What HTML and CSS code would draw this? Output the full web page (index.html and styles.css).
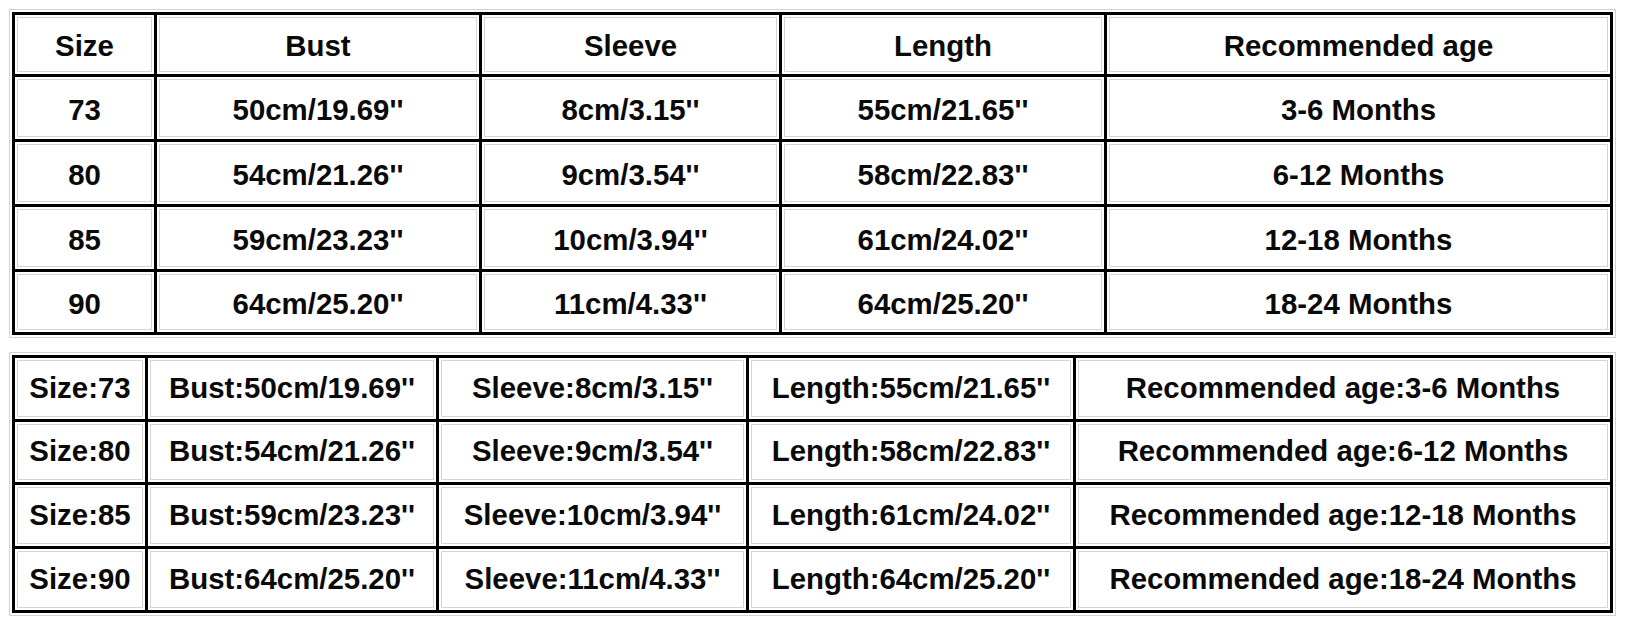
FILE: index.html
```html
<!DOCTYPE html>
<html lang="en">
<head>
<meta charset="utf-8">
<title>Size chart</title>
<link rel="stylesheet" href="styles.css">
</head>
<body>
<main class="page">
  <div class="chart chart-top">
    <div class="cell">Size</div><div class="cell">Bust</div><div class="cell">Sleeve</div><div class="cell">Length</div><div class="cell">Recommended age</div>
    <div class="cell">73</div><div class="cell">50cm/19.69''</div><div class="cell">8cm/3.15''</div><div class="cell">55cm/21.65''</div><div class="cell">3-6 Months</div>
    <div class="cell">80</div><div class="cell">54cm/21.26''</div><div class="cell">9cm/3.54''</div><div class="cell">58cm/22.83''</div><div class="cell">6-12 Months</div>
    <div class="cell">85</div><div class="cell">59cm/23.23''</div><div class="cell">10cm/3.94''</div><div class="cell">61cm/24.02''</div><div class="cell">12-18 Months</div>
    <div class="cell">90</div><div class="cell">64cm/25.20''</div><div class="cell">11cm/4.33''</div><div class="cell">64cm/25.20''</div><div class="cell">18-24 Months</div>
  </div>
  <div class="chart chart-bottom">
    <div class="cell">Size:73</div><div class="cell">Bust:50cm/19.69''</div><div class="cell">Sleeve:8cm/3.15''</div><div class="cell">Length:55cm/21.65''</div><div class="cell">Recommended age:3-6 Months</div>
    <div class="cell">Size:80</div><div class="cell">Bust:54cm/21.26''</div><div class="cell">Sleeve:9cm/3.54''</div><div class="cell">Length:58cm/22.83''</div><div class="cell">Recommended age:6-12 Months</div>
    <div class="cell">Size:85</div><div class="cell">Bust:59cm/23.23''</div><div class="cell">Sleeve:10cm/3.94''</div><div class="cell">Length:61cm/24.02''</div><div class="cell">Recommended age:12-18 Months</div>
    <div class="cell">Size:90</div><div class="cell">Bust:64cm/25.20''</div><div class="cell">Sleeve:11cm/4.33''</div><div class="cell">Length:64cm/25.20''</div><div class="cell">Recommended age:18-24 Months</div>
  </div>
</main>
</body>
</html>
```
FILE: styles.css
```css
html, body {
  margin: 0;
  padding: 0;
  background: #ffffff;
}

.page {
  display: flex;
  flex-direction: column;
  gap: 20px;
  padding: 12px 13px 15px 12px;
  font-family: "Liberation Sans", Arial, sans-serif;
  font-weight: bold;
  font-size: 29.4px;
  color: #0a0a0a;
}

.chart {
  display: grid;
  gap: 3px;
  padding: 3px;
  background: #000000;
  outline: 1px solid #d2d2d2;
  outline-offset: 2px;
  width: 1601px;
  box-sizing: border-box;
}

.chart-top {
  grid-template-columns: 139px 322px 297px 322px 503px;
  grid-template-rows: 59px 62px 62px 62px 60px;
}

.chart-bottom {
  grid-template-columns: 130px 288px 307px 324px 534px;
  grid-template-rows: 61px 60px 61px 61px;
}

.cell {
  background: #ffffff;
  display: flex;
  align-items: center;
  justify-content: center;
  padding-top: 3px;
  box-sizing: border-box;
  white-space: nowrap;
  line-height: 1;
  box-shadow: inset 0 0 0 2px #ffffff, inset 0 0 0 3px #d4d4d4;
}

.chart-bottom .cell {
  padding-top: 0;
  padding-bottom: 2px;
}
```
